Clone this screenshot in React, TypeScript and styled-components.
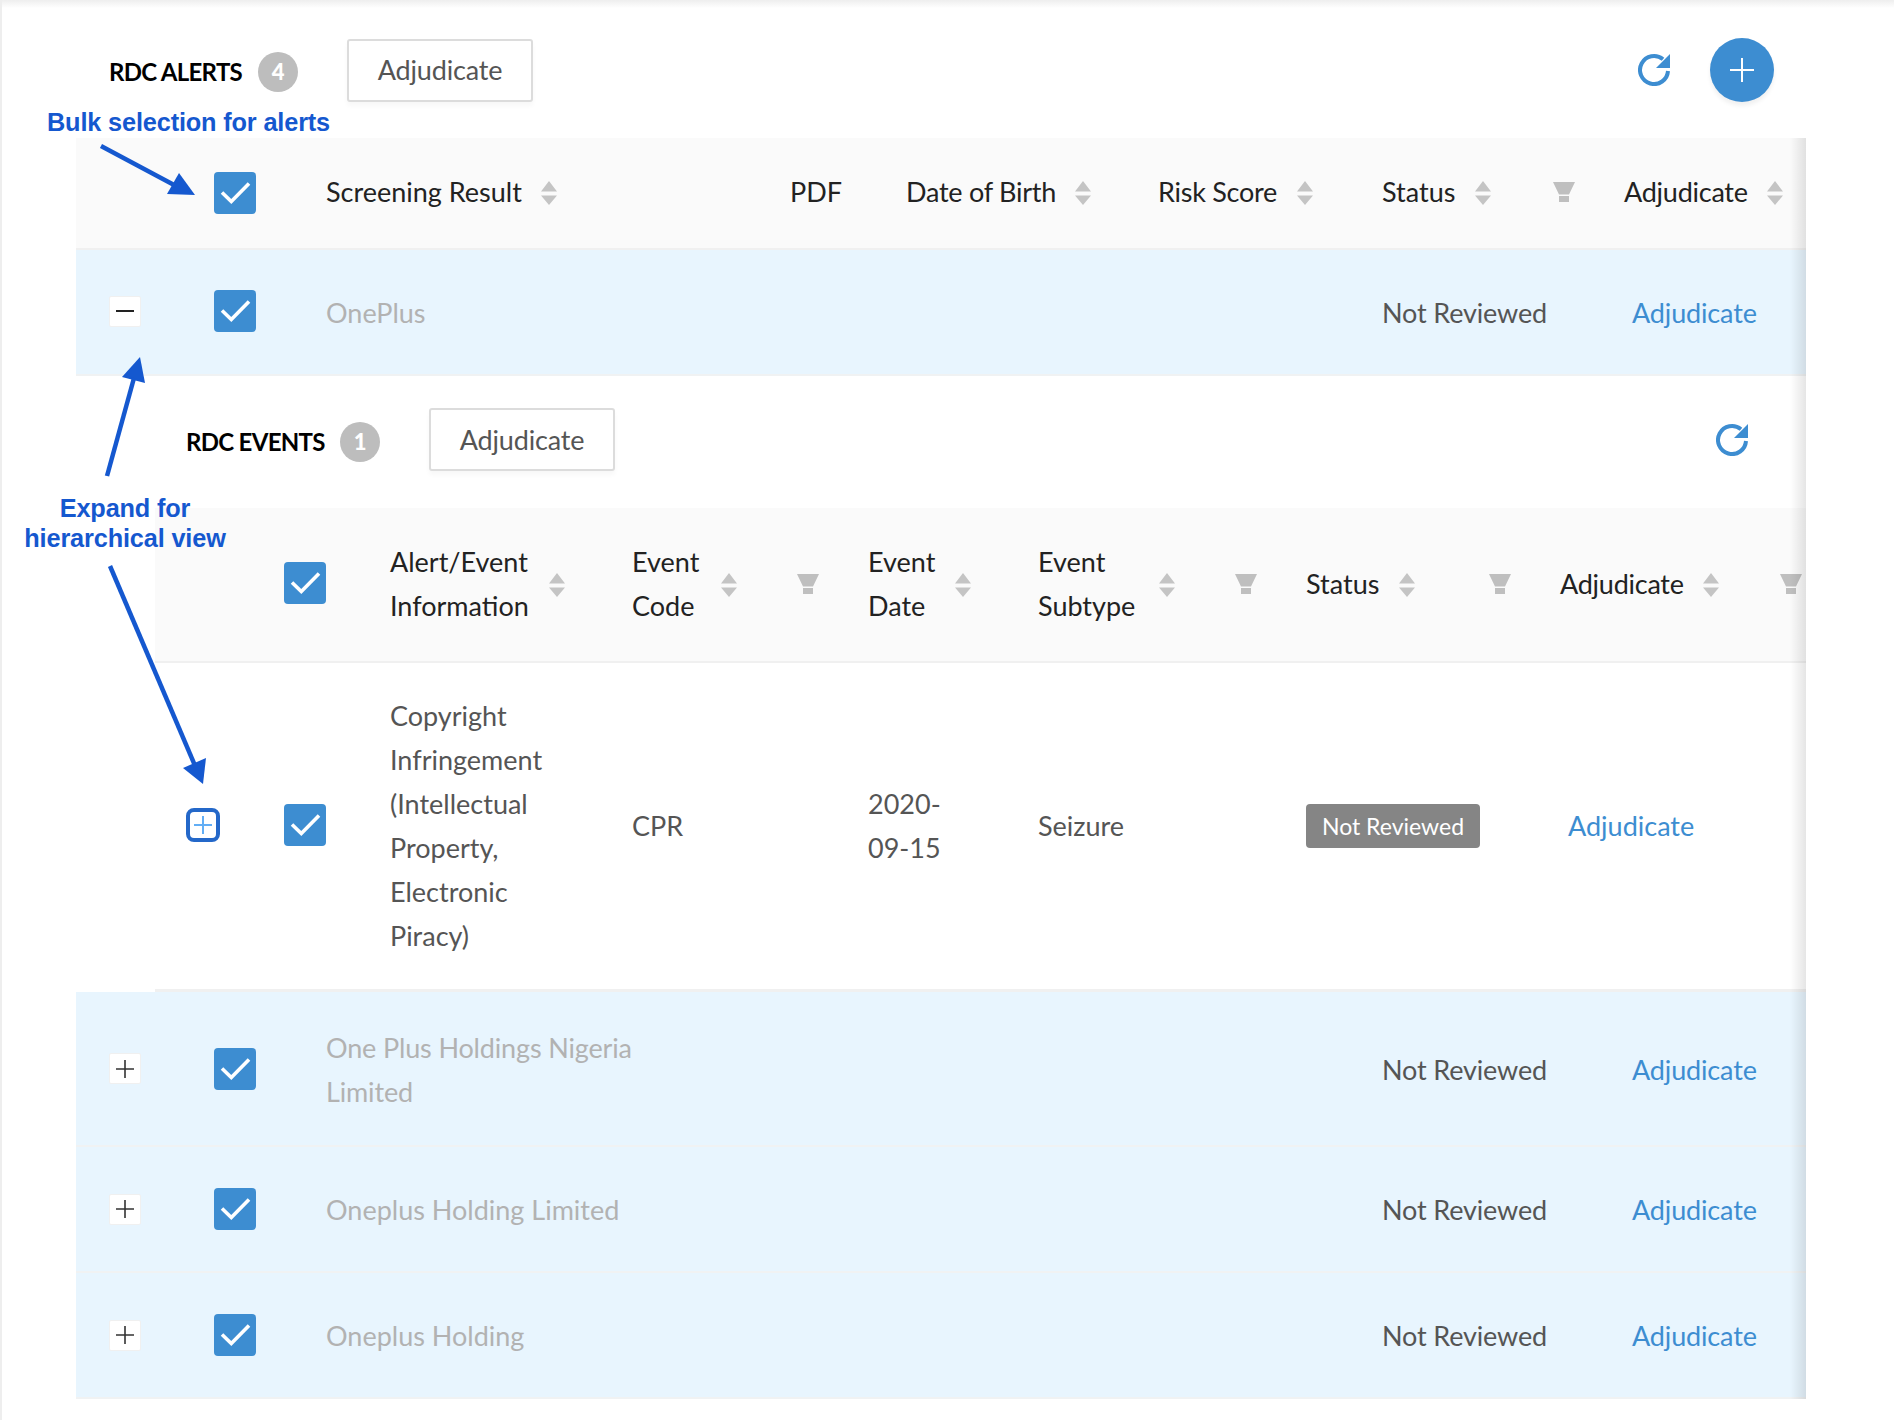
import React from "react";
import styled, { createGlobalStyle } from "styled-components";

const GlobalStyle = createGlobalStyle`
  html, body { margin: 0; padding: 0; background: #fff; }
  #root { width: 1894px; }
`;

const Page = styled.div`
  position: relative;
  box-sizing: border-box;
  width: 1894px;
  height: 1420px;
  padding: 0 88px 0 76px;
  overflow: hidden;
  background: #fff;
  font-family: "Lato", "Open Sans", sans-serif;
  font-size: 27px;
  line-height: 44px;
  letter-spacing: -0.15px;
  color: #555;
  &::before {
    content: "";
    position: absolute;
    left: 0;
    top: 0;
    right: 0;
    height: 8px;
    background: linear-gradient(#eeeeee, #ffffff);
  }
  &::after {
    content: "";
    position: absolute;
    left: 0;
    top: 0;
    bottom: 0;
    width: 2px;
    background: #eeeeee;
  }
`;

const Toolbar = styled.div<{ $nested?: boolean }>`
  display: flex;
  align-items: center;
  box-sizing: border-box;
  height: ${(p) => (p.$nested ? 132 : 138)}px;
  padding: ${(p) => (p.$nested ? "32px 58px 37px 110px" : "38px 32px 36px 33px")};
`;

const Title = styled.div<{ $width: number }>`
  margin-top: 4px;
  width: ${(p) => p.$width}px;
  font-size: 24px;
  font-weight: 700;
  letter-spacing: -0.7px;
  white-space: nowrap;
  color: #000;
`;

const CountBadge = styled.div`
  display: flex;
  align-items: center;
  justify-content: center;
  width: 40px;
  height: 40px;
  margin: 4px 49px 0 16px;
  border-radius: 50%;
  background: #bdbdbd;
  color: #fff;
  font-size: 22px;
  font-weight: 900;
`;

const OutlineButton = styled.button`
  box-sizing: border-box;
  width: 186px;
  height: 63px;
  border: 2px solid #dcdcdc;
  border-radius: 3px;
  background: #fff;
  box-shadow: 0 4px 5px rgba(0, 0, 0, 0.03);
  color: #555;
  font: inherit;
  letter-spacing: inherit;
  padding: 0;
`;

const RefreshSvg = styled.svg`
  width: 32px;
  height: 32px;
  margin-left: auto;
  flex: none;
`;

const Fab = styled.button`
  display: flex;
  align-items: center;
  justify-content: center;
  width: 64px;
  height: 64px;
  margin-left: 40px;
  padding: 0;
  border: 0;
  border-radius: 50%;
  background: #3d8dd1;
  box-shadow: 0 4px 4px rgba(0, 0, 0, 0.06);
`;

const TableFrame = styled.div`
  position: relative;
  &::after {
    content: "";
    position: absolute;
    top: 0;
    right: 0;
    bottom: 0;
    width: 16px;
    background: linear-gradient(to right, rgba(0, 0, 0, 0), rgba(0, 0, 0, 0.1));
    pointer-events: none;
  }
`;

const Muted = styled.div<{ $tight?: boolean }>`
  color: #b2b2b2;
  letter-spacing: ${(p) => (p.$tight ? "-0.15px" : "0")};
`;

const Plain = styled.div`
  color: #555;
`;

const LinkText = styled.a<{ $inset?: number }>`
  padding-left: ${(p) => p.$inset ?? 0}px;
  color: #3d8dd1;
`;

const AlertGrid = styled.div`
  display: grid;
  grid-template-columns: 138px 112px 464px 116px 252px 224px 242px 182px;
  align-items: center;
`;

const EventGrid = styled.div`
  display: grid;
  grid-template-columns: 129px 106px 242px 236px 170px 268px 254px 246px;
  align-items: center;
`;

const AlertHead = styled(AlertGrid)`
  box-sizing: border-box;
  height: 112px;
  background: #fafafa;
  border-bottom: 2px solid #f0f0f0;
  color: #222;
`;

const AlertRow = styled(AlertGrid)<{ $height: number }>`
  box-sizing: border-box;
  height: ${(p) => p.$height}px;
  background: #e8f5fe;
  border-bottom: 2px solid #f0f2f3;
  ${Muted}, ${Plain}, ${LinkText} {
    margin-top: 2px;
  }
`;

const EventHead = styled(EventGrid)`
  box-sizing: border-box;
  height: 155px;
  background: #fafafa;
  border-bottom: 2px solid #f0f0f0;
  color: #222;
`;

const EventRow = styled(EventGrid)`
  box-sizing: border-box;
  height: 329px;
  background: #fff;
  border-bottom: 3px solid #f0f0f0;
  letter-spacing: 0;
`;

const NestedPanel = styled.div`
  background: #fff;
`;

const NestedTable = styled.div`
  margin-left: 79px;
`;

const HeadCell = styled.div<{ $padRight?: number }>`
  display: flex;
  align-items: center;
  padding-right: ${(p) => p.$padRight ?? 49}px;
  white-space: nowrap;
`;

const HeadLabel = styled.span<{ $width?: number; $tight?: boolean }>`
  ${(p) => (p.$width ? `width: ${p.$width}px;` : "")}
  margin-right: 19px;
  margin-top: -2px;
  letter-spacing: ${(p) => (p.$tight ? "-0.25px" : "0")};
`;

const SortSvg = styled.svg`
  width: 16px;
  height: 24px;
  flex: none;
`;

const FilterSvg = styled.svg`
  width: 22px;
  height: 20px;
  flex: none;
  margin-left: auto;
  margin-top: -2px;
`;

const ExpandCell = styled.div<{ $lift?: number }>`
  display: flex;
  margin-top: ${(p) => -(p.$lift ?? 0)}px;
  padding-left: 33px;
`;

const EventExpandCell = styled.div`
  display: flex;
  margin-top: -2px;
  padding-left: 31px;
`;

const Expander = styled.button`
  display: flex;
  align-items: center;
  justify-content: center;
  box-sizing: border-box;
  width: 32px;
  height: 31px;
  padding: 0;
  background: #fff;
  border: 1px solid #f0f0f0;
  border-radius: 2px;
`;

const HighlightedExpander = styled.button`
  display: flex;
  align-items: center;
  justify-content: center;
  box-sizing: border-box;
  width: 34px;
  height: 34px;
  padding: 0;
  background: #fff;
  border: 4px solid #2468c9;
  border-radius: 8px;
`;

const CheckBox = styled.span<{ $lift?: number }>`
  display: block;
  width: 42px;
  height: 42px;
  margin-top: ${(p) => -(p.$lift ?? 0)}px;
  border-radius: 4px;
  background: #3d8dd1;
`;

const TagCell = styled.div`
  display: flex;
`;

const StatusTag = styled.span`
  display: flex;
  align-items: center;
  justify-content: center;
  box-sizing: border-box;
  width: 174px;
  height: 44px;
  border-radius: 4px;
  background: #858585;
  color: #fff;
  font-size: 23px;
`;

const BulkNote = styled.div`
  position: absolute;
  left: 47px;
  top: 105px;
  font: 700 25.3px/34px "Liberation Sans", Arial, sans-serif;
  color: #1558cf;
  white-space: nowrap;
`;

const ExpandNote = styled.div`
  position: absolute;
  left: 24px;
  top: 493px;
  width: 202px;
  text-align: center;
  font: 700 25.3px/30px "Liberation Sans", Arial, sans-serif;
  color: #1558cf;
  white-space: nowrap;
`;

const ArrowLayer = styled.svg`
  position: absolute;
  left: 0;
  top: 0;
  width: 1894px;
  height: 1420px;
  pointer-events: none;
`;

const Check = ({ lift }: { lift?: number }) => (
  <CheckBox $lift={lift}>
    <svg width="42" height="42" viewBox="0 0 42 42">
      <path d="M8 20.5 L17.3 29.5 L35 11.5" fill="none" stroke="#fff" strokeWidth="3.6" />
    </svg>
  </CheckBox>
);

const Sort = () => (
  <SortSvg viewBox="0 0 16 24">
    <path d="M8 0 L16 10.5 H0 Z M0 14.5 H16 L8 24 Z" fill="#c4c4c4" />
  </SortSvg>
);

const Filter = () => (
  <FilterSvg viewBox="0 0 22 20">
    <path d="M0 0 H22 L16 12.5 H6 Z M6 14 H16 V20 H6 Z" fill="#bfbfbf" />
  </FilterSvg>
);

const Refresh = () => (
  <RefreshSvg viewBox="0 0 32 32">
    <path d="M25 5.3 A14 14 0 1 0 30 17" fill="none" stroke="#3d8dd1" strokeWidth="4" />
    <path d="M32 0 V14 H18 Z" fill="#3d8dd1" />
  </RefreshSvg>
);

const PlusGlyph = ({ color = "#333", size = 18, width = 1.6 }: { color?: string; size?: number; width?: number }) => (
  <svg width={size} height={size} viewBox={`0 0 ${size} ${size}`}>
    <path d={`M${size / 2} 0 V${size} M0 ${size / 2} H${size}`} stroke={color} strokeWidth={width} fill="none" />
  </svg>
);

const MinusGlyph = () => (
  <svg width="18" height="18" viewBox="0 0 18 18">
    <path d="M0 9 H18" stroke="#222" strokeWidth="2" fill="none" />
  </svg>
);

const rows = [
  { name: <>One Plus Holdings Nigeria<br />Limited</>, height: 155, tight: true },
  { name: <>Oneplus Holding Limited</>, height: 126, tight: false },
  { name: <>Oneplus Holding</>, height: 126, tight: false },
];

export default function App() {
  return (
    <Page>
      <GlobalStyle />
      <Toolbar>
        <Title $width={133}>RDC ALERTS</Title>
        <CountBadge>4</CountBadge>
        <OutlineButton>Adjudicate</OutlineButton>
        <Refresh />
        <Fab aria-label="Add">
          <PlusGlyph color="#fff" size={24} width={2} />
        </Fab>
      </Toolbar>

      <TableFrame>
        <AlertHead>
          <div />
          <Check />
          <HeadCell><HeadLabel $width={196}>Screening Result</HeadLabel><Sort /></HeadCell>
          <HeadCell><HeadLabel>PDF</HeadLabel></HeadCell>
          <HeadCell><HeadLabel $width={150} $tight>Date of Birth</HeadLabel><Sort /></HeadCell>
          <HeadCell><HeadLabel $width={120} $tight>Risk Score</HeadLabel><Sort /></HeadCell>
          <HeadCell><HeadLabel $width={74}>Status</HeadLabel><Sort /><Filter /></HeadCell>
          <HeadCell $padRight={0}><HeadLabel $width={124} $tight>Adjudicate</HeadLabel><Sort /></HeadCell>
        </AlertHead>

        <AlertRow $height={126}>
          <ExpandCell $lift={2}><Expander aria-label="Collapse"><MinusGlyph /></Expander></ExpandCell>
          <Check lift={2} />
          <Muted>OnePlus</Muted>
          <div />
          <div />
          <div />
          <Plain>Not Reviewed</Plain>
          <LinkText $inset={8}>Adjudicate</LinkText>
        </AlertRow>

        <NestedPanel>
          <Toolbar $nested>
            <Title $width={138}>RDC EVENTS</Title>
            <CountBadge>1</CountBadge>
            <OutlineButton>Adjudicate</OutlineButton>
            <Refresh />
          </Toolbar>
          <NestedTable>
            <EventHead>
              <div />
              <Check lift={3} />
              <HeadCell><HeadLabel $width={140}>Alert/Event<br />Information</HeadLabel><Sort /></HeadCell>
              <HeadCell><HeadLabel $width={70}>Event<br />Code</HeadLabel><Sort /><Filter /></HeadCell>
              <HeadCell><HeadLabel $width={68}>Event<br />Date</HeadLabel><Sort /></HeadCell>
              <HeadCell><HeadLabel $width={102}>Event<br />Subtype</HeadLabel><Sort /><Filter /></HeadCell>
              <HeadCell><HeadLabel $width={74}>Status</HeadLabel><Sort /><Filter /></HeadCell>
              <HeadCell $padRight={4}><HeadLabel $width={124} $tight>Adjudicate</HeadLabel><Sort /><Filter /></HeadCell>
            </EventHead>
            <EventRow>
              <EventExpandCell>
                <HighlightedExpander aria-label="Expand">
                  <PlusGlyph color="#62aef5" size={18} width={2} />
                </HighlightedExpander>
              </EventExpandCell>
              <Check lift={2} />
              <Plain>Copyright<br />Infringement<br />(Intellectual<br />Property,<br />Electronic<br />Piracy)</Plain>
              <Plain>CPR</Plain>
              <Plain>2020-<br />09-15</Plain>
              <Plain>Seizure</Plain>
              <TagCell><StatusTag>Not Reviewed</StatusTag></TagCell>
              <LinkText $inset={8}>Adjudicate</LinkText>
            </EventRow>
          </NestedTable>
        </NestedPanel>

        {rows.map((row, i) => (
          <AlertRow key={i} $height={row.height}>
            <ExpandCell><Expander aria-label="Expand"><PlusGlyph /></Expander></ExpandCell>
            <Check />
            <Muted $tight={row.tight}>{row.name}</Muted>
            <div />
            <div />
            <div />
            <Plain>Not Reviewed</Plain>
            <LinkText $inset={8}>Adjudicate</LinkText>
          </AlertRow>
        ))}
      </TableFrame>

      <BulkNote>Bulk selection for alerts</BulkNote>
      <ExpandNote>Expand for<br />hierarchical view</ExpandNote>
      <ArrowLayer viewBox="0 0 1894 1420">
        <g fill="#1558cf" stroke="none">
          <path d="M179 173 L167 194 L195 195 Z" />
          <path d="M122 377 L145 383 L140 357 Z" />
          <path d="M183 768 L206 758 L203 784 Z" />
        </g>
        <g stroke="#1558cf" strokeWidth="4.5" fill="none">
          <path d="M101 146 L176 186" />
          <path d="M107 476 L134 378" />
          <path d="M110 566 L196 768" />
        </g>
      </ArrowLayer>
    </Page>
  );
}
